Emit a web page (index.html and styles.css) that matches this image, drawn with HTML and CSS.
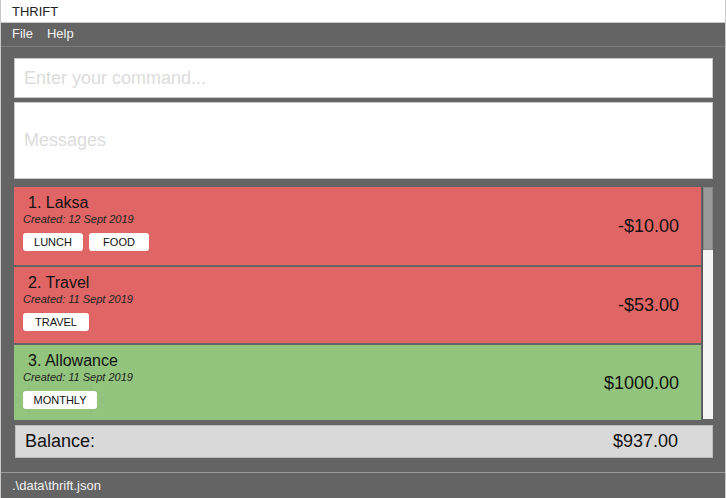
FILE: index.html
```html
<!DOCTYPE html>
<html>
<head>
<meta charset="utf-8">
<link rel="stylesheet" href="styles.css">
</head>
<body>
<div class="window">
  <div class="titlebar">THRIFT</div>
  <div class="menubar"><span class="menu">File</span><span class="menu">Help</span></div>
  <div class="main">
    <div class="command">Enter your command...</div>
    <div class="messages">Messages</div>
    <div class="listwrap">
      <div class="list">
        <div class="card red first">
          <div class="info">
            <div class="title">1. Laksa</div>
            <div class="created">Created: 12 Sept 2019</div>
            <div class="tags"><span class="tag">LUNCH</span><span class="tag">FOOD</span></div>
          </div>
          <div class="amount">-$10.00</div>
        </div>
        <div class="card red second">
          <div class="info">
            <div class="title">2. Travel</div>
            <div class="created">Created: 11 Sept 2019</div>
            <div class="tags"><span class="tag wide">TRAVEL</span></div>
          </div>
          <div class="amount">-$53.00</div>
        </div>
        <div class="card green third">
          <div class="info">
            <div class="title">3. Allowance</div>
            <div class="created">Created: 11 Sept 2019</div>
            <div class="tags"><span class="tag wider">MONTHLY</span></div>
          </div>
          <div class="amount">$1000.00</div>
        </div>
      </div>
      <div class="scrollbar"><div class="thumb"></div></div>
    </div>
    <div class="balance"><span>Balance:</span><span>$937.00</span></div>
  </div>
  <div class="status">.\data\thrift.json</div>
</div>
</body>
</html>
```
FILE: styles.css
```css
html, body {
  margin: 0;
  padding: 0;
}
body {
  width: 726px;
  height: 498px;
  overflow: hidden;
  font-family: "Liberation Sans", Arial, sans-serif;
  background: #646464;
}
.window {
  width: 726px;
  height: 498px;
  box-sizing: border-box;
  border-left: 1px solid #c8c8c8;
  border-right: 1px solid #c8c8c8;
  display: flex;
  flex-direction: column;
  background: #646464;
}
.titlebar {
  height: 23px;
  background: #fff;
  color: #222;
  font-size: 13px;
  line-height: 23px;
  padding-left: 11px;
  box-sizing: border-box;
  border-bottom: 1px solid #c8c8c8;
}
.menubar {
  height: 23px;
  background: #646464;
  border-bottom: 1px solid #7d7d7d;
  color: #f2f2f2;
  font-size: 13px;
  line-height: 22px;
  padding-left: 11px;
  display: flex;
  gap: 14px;
}
.main {
  flex: 1;
  padding: 11px 12px 0 13px;
  display: flex;
  flex-direction: column;
}
.command {
  height: 40px;
  box-sizing: border-box;
  background: #fff;
  border: 1px solid #c8c8c8;
  color: #dcdcdc;
  font-size: 18px;
  line-height: 38px;
  padding-left: 9px;
}
.messages {
  margin-top: 4px;
  height: 77px;
  box-sizing: border-box;
  background: #fff;
  border: 1px solid #c8c8c8;
  color: #dcdcdc;
  font-size: 18px;
  line-height: 75px;
  padding-left: 9px;
}
.listwrap {
  margin-top: 7px;
  height: 234px;
  display: flex;
  gap: 1px;
}
.list {
  flex: 1;
  display: flex;
  flex-direction: column;
  gap: 2px;
  padding-top: 1px;
}
.card {
  display: flex;
  justify-content: space-between;
  align-items: center;
  box-sizing: border-box;
  padding: 0 22px 0 9px;
}
.card.first { height: 78px; }
.card.second { height: 76px; }
.card.third { height: 75px; }
.red { background: #e06666; }
.green { background: #93c47d; }
.info {
  display: flex;
  flex-direction: column;
  align-self: flex-start;
  padding-top: 7px;
}
.title {
  font-size: 16px;
  color: #111;
  padding-left: 5px;
  line-height: 18px;
}
.created {
  font-size: 11px;
  font-style: italic;
  color: #222;
  line-height: 14px;
}
.tags {
  display: flex;
  gap: 6px;
  margin-top: 7px;
}
.tag {
  background: #fff;
  border-radius: 3px;
  height: 18px;
  width: 60px;
  font-size: 11px;
  line-height: 18px;
  text-align: center;
  color: #111;
}
.tag.wide { width: 66px; }
.tag.wider { width: 74px; }
.amount {
  font-size: 18px;
  color: #111;
  padding-top: 1px;
}
.scrollbar {
  width: 10px;
  background: #f4f4f4;
  margin-top: 1px;
  margin-bottom: 1px;
  border-left: 1px solid #555;
}
.thumb {
  height: 63px;
  background: #9a9a9a;
  border: 1px solid #888;
  box-sizing: border-box;
}
.balance {
  margin-top: 5px;
  height: 33px;
  box-sizing: border-box;
  background: #d9d9d9;
  border: 1px solid #bdbdbd;
  margin-left: 1px;
  display: flex;
  justify-content: space-between;
  align-items: center;
  padding: 0 34px 0 9px;
  font-size: 18px;
  color: #111;
}
.status {
  height: 26px;
  box-sizing: border-box;
  border-top: 1px solid #9a9a9a;
  color: #f2f2f2;
  font-size: 13px;
  line-height: 25px;
  padding-left: 11px;
  background: #646464;
}
```
